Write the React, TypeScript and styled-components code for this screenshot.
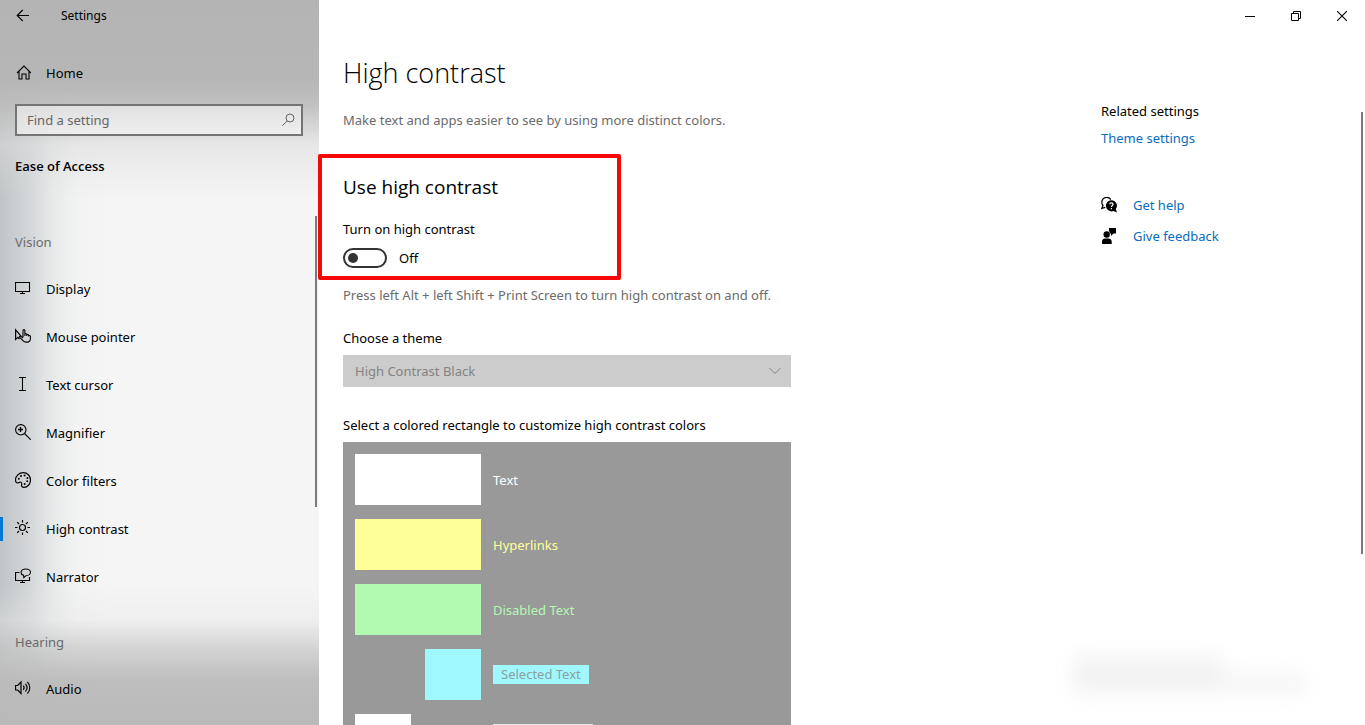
import React from "react";
import styled, { createGlobalStyle } from "styled-components";

const GlobalStyle = createGlobalStyle`
  *, *::before, *::after { box-sizing: border-box; }
  body {
    margin: 0;
    background: #fff;
    color: #000;
    font-family: "Noto Sans", "Open Sans", sans-serif;
    font-size: 13px;
    line-height: 20px;
  }
  button, input, select { font: inherit; color: inherit; }
  h1, h2, h3, p { margin: 0; font-weight: 400; }
`;

const Shell = styled.div`
  position: relative;
  display: flex;
  height: 100vh;
  overflow: hidden;
`;

/* ---------- Sidebar ---------- */

const Sidebar = styled.aside`
  position: relative;
  flex: 0 0 319px;
  overflow: hidden;
  background:
    linear-gradient(180deg, #b4b4b4 0, #b6b6b6 80px, rgba(188, 188, 188, 0.9) 105px, rgba(218, 218, 218, 0.5) 145px, rgba(244, 244, 244, 0) 200px),
    linear-gradient(0deg, #b9b9b9 0, rgba(187, 187, 187, 0.95) 45px, rgba(196, 196, 196, 0.7) 75px, rgba(230, 230, 230, 0.4) 105px, rgba(244, 244, 244, 0) 140px),
    linear-gradient(90deg, #c0c4c6 0, rgba(204, 208, 210, 0.85) 28px, rgba(222, 225, 226, 0.6) 52px, rgba(238, 239, 239, 0.4) 76px, rgba(244, 244, 244, 0) 110px),
    #f5f5f5;
`;

const SidebarTitleBar = styled.header`
  display: flex;
  align-items: center;
  height: 32px;
  gap: 15px;
  font-size: 12px;
`;

const IconButton = styled.button<{ $width: number }>`
  display: flex;
  align-items: center;
  justify-content: center;
  width: ${(p) => p.$width}px;
  height: 32px;
  padding: 0;
  border: 0;
  background: none;
`;

const NavLink = styled.a<{ $active?: boolean }>`
  display: flex;
  align-items: center;
  gap: 15px;
  height: 48px;
  padding-left: 15px;
  color: #000;
  text-decoration: none;
  background: ${(p) =>
    p.$active ? "linear-gradient(#0078d7, #0078d7) left center / 3px 24px no-repeat" : "none"};
  svg { margin-bottom: 2px; }
`;

const HomeLink = styled(NavLink)`
  margin-top: 17px;
`;

const SearchField = styled.label`
  display: flex;
  align-items: center;
  height: 32px;
  margin: 7px 16px 0 15px;
  padding: 0 5px 0 10px;
  border: 2px solid #757575;
  background: rgba(255, 255, 255, 0.5);
  color: #666;
`;

const SearchInput = styled.input`
  flex: 1;
  min-width: 0;
  padding: 0;
  border: 0;
  outline: 0;
  background: none;
  &::placeholder { color: #666; opacity: 1; }
`;

const SidebarHeading = styled.h2`
  margin: 18px 0 52px 15px;
  font-family: "Open Sans", sans-serif;
  font-size: 13px;
  font-weight: 600;
  line-height: 24px;
`;

const NavGroup = styled.section`
  & + & { margin-top: 29px; }
`;

const NavGroupTitle = styled.h3`
  margin: 0 0 11px 15px;
  font-size: 13px;
  line-height: 24px;
  color: #6a6a6a;
`;

const ScrollThumb = styled.div<{ $top: number; $length: number }>`
  position: absolute;
  top: ${(p) => p.$top}px;
  right: 2px;
  width: 2px;
  height: ${(p) => p.$length}px;
  background: #7a7a7a;
`;

/* ---------- Main area ---------- */

const Main = styled.main`
  display: flex;
  flex: 1;
  flex-direction: column;
  min-width: 0;
`;

const WindowControls = styled.header`
  display: flex;
  flex: 0 0 32px;
  justify-content: flex-end;
`;

const Columns = styled.div`
  display: grid;
  grid-template-columns: minmax(0, 1fr) 264px;
  flex: 1;
  min-height: 0;
`;

const Content = styled.div`
  max-width: 472px;
  padding: 23px 0 0 24px;
`;

const PageTitle = styled.h1`
  font-family: "Open Sans", sans-serif;
  font-size: 27px;
  font-weight: 300;
  line-height: 36px;
`;

const Muted = styled.p<{ $top: number }>`
  margin-top: ${(p) => p.$top}px;
  color: #6b6b6b;
  white-space: nowrap;
`;

const ToggleSection = styled.section`
  position: relative;
  margin-top: 43px;
`;

const SectionTitle = styled.h2`
  font-family: "Open Sans", sans-serif;
  font-size: 19px;
  line-height: 28px;
`;

const FieldLabel = styled.label<{ $top: number }>`
  display: block;
  margin: ${(p) => p.$top}px 0 7px;
`;

const ToggleRow = styled.div`
  display: flex;
  align-items: center;
  gap: 12px;
  margin-top: 9px;
`;

const Switch = styled.input`
  display: flex;
  align-items: center;
  appearance: none;
  width: 44px;
  height: 20px;
  margin: 0;
  padding-left: 3px;
  border: 2px solid #333;
  border-radius: 10px;
  background: #fff;
  &::before {
    content: "";
    width: 10px;
    height: 10px;
    border-radius: 50%;
    background: #333;
  }
  &:checked { justify-content: flex-end; padding: 0 3px 0 0; }
`;

const Highlight = styled.div`
  position: absolute;
  top: -19px;
  left: -25px;
  width: 303px;
  height: 126px;
  border: 4px solid #f60808;
  border-radius: 2px;
  pointer-events: none;
`;

const SelectWrap = styled.div`
  position: relative;
  color: #838383;
`;

const ThemeSelect = styled.select`
  display: block;
  appearance: none;
  width: 100%;
  height: 32px;
  padding: 0 36px 0 12px;
  border: 0;
  border-radius: 0;
  background: #ccc;
  color: #838383;
  opacity: 1;
`;

const SelectArrow = styled.svg`
  position: absolute;
  top: 12px;
  right: 10px;
  pointer-events: none;
`;

const Palette = styled.div`
  display: flex;
  flex-direction: column;
  gap: 14px;
  padding: 12px;
  background: #999;
`;

const PaletteRow = styled.div`
  display: flex;
  align-items: center;
  gap: 12px;
`;

const Swatches = styled.div`
  display: flex;
  gap: 14px;
  width: 126px;
  height: 51px;
`;

const Swatch = styled.button<{ $color: string }>`
  flex: 1;
  padding: 0;
  border: 0;
  background: ${(p) => p.$color};
`;

const Sample = styled.span<{ $color: string }>`
  color: ${(p) => p.$color};
`;

const SelectedSample = styled(Sample)`
  padding: 0 8px;
  background: #a0f8ff;
  line-height: 19px;
`;

const ButtonSample = styled.div`
  width: 100px;
  height: 31px;
  border: 2px solid #e6e6e6;
`;

/* ---------- Related column ---------- */

const Related = styled.aside`
  padding-top: 69px;
`;

const RelatedTitle = styled.h3`
  font-size: 13px;
`;

const TextLink = styled.a`
  color: #0a6cbf;
  text-decoration: none;
`;

const RelatedLink = styled(TextLink)`
  display: block;
  margin-top: 7px;
`;

const HelpList = styled.nav`
  display: flex;
  flex-direction: column;
  gap: 11px;
  margin-top: 47px;
`;

const HelpRow = styled.div`
  display: flex;
  align-items: center;
  gap: 16px;
`;

const Smudge = styled.div`
  position: absolute;
  right: 60px;
  bottom: 32px;
  width: 232px;
  height: 36px;
  background:
    linear-gradient(#f2f2f2, #f2f2f2) left top / 150px 100% no-repeat,
    linear-gradient(#f5f5f5, #f5f5f5) right bottom / 90px 20px no-repeat;
  filter: blur(10px);
  pointer-events: none;
`;

/* ---------- Icons ---------- */

type IconProps = { children: React.ReactNode; size?: number };

const Icon = ({ children, size = 16 }: IconProps) => (
  <svg
    width={size}
    height={size}
    viewBox={`0 0 ${size} ${size}`}
    fill="none"
    stroke="currentColor"
    strokeWidth="1"
    aria-hidden="true"
  >
    {children}
  </svg>
);

const BackIcon = () => (
  <Icon>
    <path d="M14 7.500H2.500M7.700 2 2.200 7.500 7.700 13" strokeWidth="1.100" />
  </Icon>
);

const HomeIcon = () => (
  <Icon>
    <path d="M2 9 9 2 16 9M4 7.500V15h3v-5h4v5h3V7.500" strokeWidth="1.100" />
  </Icon>
);

const SearchIcon = () => (
  <Icon>
    <circle cx="10" cy="6" r="4" />
    <path d="M7.200 8.900 2.300 13.800" />
  </Icon>
);

const DisplayIcon = () => (
  <Icon>
    <path d="M.5 2.500h14v9H.5zM7.500 11.500v2M5 13.500h5" strokeWidth="1.100" />
  </Icon>
);

const PointerIcon = () => (
  <Icon>
    <path d="M6.300 8.300.6 1.800v9.600l2.300-2.100 1.500 1.800" strokeWidth="1.200" />
    <path
      d="M8 9.300V2.600c0-1.300 1.900-1.300 1.900 0v4M9.900 8V6.300c.2-.9 1.700-.8 1.900.1V8M11.800 7c.2-.9 1.700-.7 1.900.2v1.200M13.700 7.900c.3-.7 1.600-.5 1.700.4v2.200c0 2-1.200 3.600-3.200 3.600h-1.300c-1.200 0-2.100-.6-2.900-1.500L4.700 9.300c-.6-.9.4-1.600 1.200-1L8 10"
      strokeWidth="1.100"
    />
  </Icon>
);

const CursorIcon = () => (
  <Icon>
    <path d="M4 1.500h7M4 14.500h7M7.500 1.500v13" strokeWidth="1.100" />
  </Icon>
);

const MagnifierIcon = () => (
  <Icon>
    <circle cx="5.800" cy="5.800" r="5.200" strokeWidth="1.100" />
    <path d="M9.500 9.500 15.700 15.700" strokeWidth="1.100" />
    <path d="M3 5.500h5M5.500 3v5" strokeWidth="1.300" />
  </Icon>
);

const PaletteIcon = () => (
  <Icon>
    <path
      d="M8.300.6c4 0 7.200 3.200 7.200 7.300 0 4.200-3.100 7.500-6.600 7.500-1.800 0-2.600-1-2.300-2.500.3-1.600 0-2.700-1.100-2.900-1.300-.2-1.800 1.200-3.100 1C1.200 10.800.5 9.700.5 8.200.5 4 4 .6 8.300.6Z"
      strokeWidth="1.200"
    />
    <g fill="currentColor" stroke="none">
      <circle cx="3.800" cy="6.800" r="1" />
      <circle cx="6" cy="4" r="1" />
      <circle cx="9.600" cy="3.600" r="1" />
      <circle cx="12.400" cy="6" r="1" />
      <circle cx="12.200" cy="9.300" r="1" />
      <circle cx="9.700" cy="12" r="1" />
    </g>
  </Icon>
);

const SunIcon = () => (
  <Icon>
    <circle cx="7.500" cy="7.500" r="3" strokeWidth="1.200" />
    <path
      d="M7.500 0v2.500M7.500 12.500V15M0 7.500h2.500M12.500 7.500H15M2.200 2.200 4 4M11 11l1.800 1.800M12.800 2.200 11 4M4 11l-1.800 1.800"
      strokeWidth="1.200"
    />
  </Icon>
);

const NarratorIcon = () => (
  <Icon>
    <path d="M4.500 4.500h-4v8h14V9M7.500 12.500v2M5 14.500h5" strokeWidth="1.200" />
    <path
      d="M8.600 7.300C7 6.800 6 5.800 6 4.500 6 2.500 8.200 1 10.800 1s4.700 1.500 4.700 3.300-2.100 3.400-4.500 3.400L8.800 9.600Z"
      strokeWidth="1.100"
    />
  </Icon>
);

const AudioIcon = () => (
  <Icon>
    <path d="M.5 5.500h2.200L6 2v11.500L2.700 10H.5z" strokeWidth="1.200" />
    <path
      d="M8.300 5.600c1 1.300 1 3 0 4.300M10.400 3.900c2 2.300 2 5.300 0 7.600M12.400 2c3.200 3.300 3.200 8.200 0 11.500"
      strokeWidth="1.100"
    />
  </Icon>
);

const HelpIcon = () => (
  <Icon>
    <path d="M9.800 2.600A4.900 4.900 0 0 0 .8 5.300c0 1.300.4 2.300 1.200 3.200L.8 11.300l3.500-1" strokeWidth="1.200" />
    <path
      d="M10.300 3.200a5.600 5.600 0 0 1 4.500 8.900l1.200 3.500-3.700-1.500a5.600 5.600 0 1 1-2-10.900Z"
      fill="currentColor"
      stroke="none"
    />
    <path d="M8.700 7.300c.1-2 3.500-1.900 3.300.1-.1 1.100-1.600 1.200-1.600 2.600M10.400 11v1.200" stroke="#fff" strokeWidth="1.200" />
  </Icon>
);

const FeedbackIcon = () => (
  <Icon>
    <g fill="currentColor" stroke="none">
      <circle cx="5.700" cy="6.500" r="3.200" />
      <path d="M1 16v-2.500C1 11.600 2.500 10.500 4 10.500h3.500c1.800 0 3.200 1.200 3.200 3V16ZM8 0h7v5.500h-2.500L10 8V5.500H8.900C8.900 4.300 8.500 3.500 8 3Z" />
    </g>
  </Icon>
);

const MinimizeIcon = () => (
  <Icon size={10}>
    <path d="M0 5.500h10" />
  </Icon>
);

const RestoreIcon = () => (
  <Icon size={10}>
    <path d="M.5 2.500h7v7h-7zM2.500 2.500v-2h7v7h-2" />
  </Icon>
);

const CloseIcon = () => (
  <Icon size={10}>
    <path d="M0 0 10 10M10 0 0 10" strokeWidth="1.100" />
  </Icon>
);

/* ---------- Page ---------- */

const visionItems = [
  { label: "Display", icon: <DisplayIcon /> },
  { label: "Mouse pointer", icon: <PointerIcon /> },
  { label: "Text cursor", icon: <CursorIcon /> },
  { label: "Magnifier", icon: <MagnifierIcon /> },
  { label: "Color filters", icon: <PaletteIcon /> },
  { label: "High contrast", icon: <SunIcon />, active: true },
  { label: "Narrator", icon: <NarratorIcon /> },
];

const colorRows = [
  { label: "Text", color: "#ffffff" },
  { label: "Hyperlinks", color: "#ffff99" },
  { label: "Disabled Text", color: "#b2fab2" },
];

export default function App() {
  return (
    <Shell>
      <GlobalStyle />
      <Sidebar>
        <SidebarTitleBar>
          <IconButton $width={46} aria-label="Back">
            <BackIcon />
          </IconButton>
          <span>Settings</span>
        </SidebarTitleBar>
        <HomeLink href="#home">
          <HomeIcon />
          Home
        </HomeLink>
        <SearchField>
          <SearchInput type="text" placeholder="Find a setting" aria-label="Find a setting" />
          <SearchIcon />
        </SearchField>
        <SidebarHeading>Ease of Access</SidebarHeading>
        <NavGroup>
          <NavGroupTitle>Vision</NavGroupTitle>
          {visionItems.map((item) => (
            <NavLink key={item.label} href="#" $active={item.active}>
              {item.icon}
              {item.label}
            </NavLink>
          ))}
        </NavGroup>
        <NavGroup>
          <NavGroupTitle>Hearing</NavGroupTitle>
          <NavLink href="#">
            <AudioIcon />
            Audio
          </NavLink>
        </NavGroup>
        <ScrollThumb $top={216} $length={291} />
      </Sidebar>

      <Main>
        <WindowControls>
          <IconButton $width={46} aria-label="Minimize">
            <MinimizeIcon />
          </IconButton>
          <IconButton $width={46} aria-label="Restore">
            <RestoreIcon />
          </IconButton>
          <IconButton $width={46} aria-label="Close">
            <CloseIcon />
          </IconButton>
        </WindowControls>
        <Columns>
          <Content>
            <PageTitle>High contrast</PageTitle>
            <Muted $top={19}>Make text and apps easier to see by using more distinct colors.</Muted>
            <ToggleSection>
              <SectionTitle>Use high contrast</SectionTitle>
              <FieldLabel $top={18} htmlFor="contrast">
                Turn on high contrast
              </FieldLabel>
              <ToggleRow>
                <Switch type="checkbox" role="switch" id="contrast" />
                <span>Off</span>
              </ToggleRow>
              <Highlight />
            </ToggleSection>
            <Muted $top={17}>Press left Alt + left Shift + Print Screen to turn high contrast on and off.</Muted>
            <FieldLabel $top={23} htmlFor="theme">
              Choose a theme
            </FieldLabel>
            <SelectWrap>
              <ThemeSelect id="theme" disabled>
                <option>High Contrast Black</option>
              </ThemeSelect>
              <SelectArrow width="12" height="8" viewBox="0 0 12 8" fill="none" stroke="currentColor" aria-hidden="true">
                <path d="M.5 1 6 6.500 11.500 1" />
              </SelectArrow>
            </SelectWrap>
            <FieldLabel as="p" $top={28}>
              Select a colored rectangle to customize high contrast colors
            </FieldLabel>
            <Palette>
              {colorRows.map((row) => (
                <PaletteRow key={row.label}>
                  <Swatches>
                    <Swatch $color={row.color} disabled aria-label={row.label} />
                  </Swatches>
                  <Sample $color={row.color}>{row.label}</Sample>
                </PaletteRow>
              ))}
              <PaletteRow>
                <Swatches>
                  <Swatch $color="#999999" disabled aria-label="Selected text foreground" />
                  <Swatch $color="#a0f8ff" disabled aria-label="Selected text background" />
                </Swatches>
                <SelectedSample $color="#8c9fa1">Selected Text</SelectedSample>
              </PaletteRow>
              <PaletteRow>
                <Swatches>
                  <Swatch $color="#ffffff" disabled aria-label="Button text foreground" />
                  <Swatch $color="#999999" disabled aria-label="Button text background" />
                </Swatches>
                <ButtonSample />
              </PaletteRow>
            </Palette>
          </Content>
          <Related>
            <RelatedTitle>Related settings</RelatedTitle>
            <RelatedLink href="#themes">Theme settings</RelatedLink>
            <HelpList>
              <HelpRow>
                <HelpIcon />
                <TextLink href="#help">Get help</TextLink>
              </HelpRow>
              <HelpRow>
                <FeedbackIcon />
                <TextLink href="#feedback">Give feedback</TextLink>
              </HelpRow>
            </HelpList>
          </Related>
        </Columns>
      </Main>
      <ScrollThumb $top={112} $length={442} />
      <Smudge />
    </Shell>
  );
}
